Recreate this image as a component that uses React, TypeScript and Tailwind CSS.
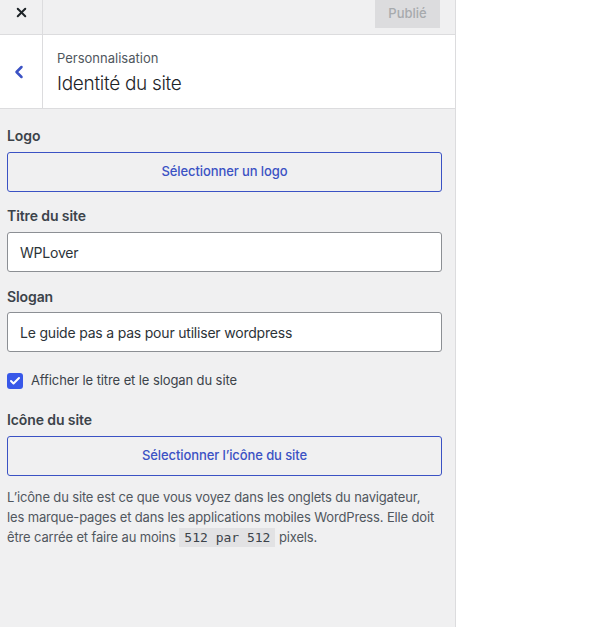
import { Check, ChevronLeft, X } from "lucide-react";

const font = { fontFamily: "Inter, 'Noto Sans', sans-serif" };

function Label({ children }: { children: React.ReactNode }) {
  return <div className="text-[14px] leading-5 font-semibold text-[#3c434a] tracking-[-0.1px]">{children}</div>;
}

function MediaButton({ children }: { children: React.ReactNode }) {
  return (
    <button className="w-full h-10 rounded-[3px] border border-[#3b52c4] bg-[#f0f0f1] text-[13px] font-medium text-[#3b52c4] tracking-[-0.1px]">
      {children}
    </button>
  );
}

function TextInput({ value }: { value: string }) {
  return (
    <div className="h-10 rounded-[3px] border border-[#8c8f94] bg-white px-3 flex items-center text-[14px] tracking-[-0.2px] text-[#2c3338]">
      {value}
    </div>
  );
}

export default function App() {
  return (
    <div className="flex w-[590px] h-[627px] bg-white" style={font}>
      <aside className="w-[456px] h-full flex flex-col bg-[#f0f0f1] border-r border-[#dcdcde]">
        {/* top actions */}
        <div className="h-[35px] flex border-b border-[#dcdcde] bg-[#f0f0f1]">
          <div className="w-[43px] flex items-center justify-center border-r border-[#dcdcde] pb-[10px]">
            <X className="w-[15px] h-[15px] text-[#1d2327]" strokeWidth={3.2} />
          </div>
          <div className="flex-1 flex justify-end pr-[15px]">
            <div className="w-[65px] h-[28px] bg-[#dcdcde] flex items-center justify-center text-[13px] font-medium text-[#a7aaad]">
              Publié
            </div>
          </div>
        </div>

        {/* section header */}
        <div className="h-[74px] flex bg-white border-b border-[#dcdcde]">
          <div className="w-[43px] flex items-center justify-center border-r border-[#dcdcde]">
            <ChevronLeft className="w-5 h-5 text-[#3b52c4] -translate-x-[2px]" strokeWidth={3} />
          </div>
          <div className="pl-[14px] pt-[13px]">
            <div className="text-[13px] leading-5 text-[#50575e]">Personnalisation</div>
            <div className="text-[19px] leading-7 font-light text-[#1d2327] tracking-[-0.3px] mt-[2px]">
              Identité du site
            </div>
          </div>
        </div>

        <div className="pl-[7px] pr-[13px] pt-[17px] flex flex-col">
          <Label>Logo</Label>
          <div className="mt-[6px]">
            <MediaButton>Sélectionner un logo</MediaButton>
          </div>

          <div className="mt-[14px]">
            <Label>Titre du site</Label>
          </div>
          <div className="mt-[6px]">
            <TextInput value="WPLover" />
          </div>

          <div className="mt-[15px]">
            <Label>Slogan</Label>
          </div>
          <div className="mt-[5px]">
            <TextInput value="Le guide pas a pas pour utiliser wordpress" />
          </div>

          <div className="mt-[19px] flex items-center gap-2">
            <div className="w-4 h-4 rounded-[3px] bg-[#3858e9] flex items-center justify-center">
              <Check className="w-3 h-3 text-white" strokeWidth={4} />
            </div>
            <span className="text-[13px] text-[#3c434a] tracking-[-0.1px]">Afficher le titre et le slogan du site</span>
          </div>

          <div className="mt-[19px]">
            <Label>Icône du site</Label>
          </div>
          <div className="mt-[6px]">
            <MediaButton>Sélectionner l’icône du site</MediaButton>
          </div>

          <p className="mt-[11px] text-[13px] leading-5 text-[#50575e] tracking-[-0.15px] whitespace-nowrap">
            L’icône du site est ce que vous voyez dans les onglets du navigateur,
            <br />
            les marque-pages et dans les applications mobiles WordPress. Elle doit
            <br />
            être carrée et faire au moins{" "}
            <code
              className="bg-[#e2e2e4] px-[5px] py-[2px] text-[13px] tracking-normal text-[#3c434a]"
              style={{ fontFamily: "'DejaVu Sans Mono', monospace" }}
            >
              512 par 512
            </code>{" "}
            pixels.
          </p>
        </div>
      </aside>
      <div className="flex-1" />
    </div>
  );
}
